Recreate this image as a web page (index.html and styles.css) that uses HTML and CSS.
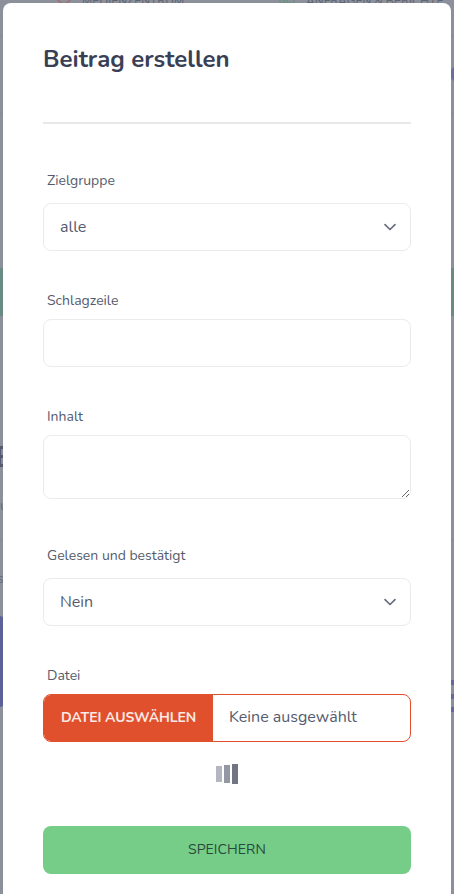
FILE: index.html
```html
<!DOCTYPE html>
<html lang="de">
<head>
<meta charset="utf-8">
<title>Beitrag erstellen</title>
<link rel="stylesheet" href="styles.css">
</head>
<body>
<div class="backdrop" aria-hidden="true">
  <svg class="page-icon media" viewBox="0 0 16 16"><circle cx="8" cy="8" r="6.5"/></svg>
  <span class="nav-text nav-media">MEDIENZENTRUM</span>
  <svg class="page-icon reports" viewBox="0 0 16 16"><path d="M1 1v13h14V1M5 1v14M5 9l6 6"/></svg>
  <span class="nav-text nav-reports">ANFRAGEN &amp; BERICHTE</span>
  <i class="band"></i>
  <span class="page-heading">E</span>
  <span class="page-copy copy-one">u</span>
  <span class="page-copy copy-two">s</span>
  <i class="rule rule-one"></i><i class="rule rule-two"></i><i class="rule rule-three"></i>
  <i class="tile"></i>
  <i class="dot"></i>
  <i class="menu-bar bar-one"></i><i class="menu-bar bar-two"></i><i class="menu-bar bar-three"></i>
</div>
<form class="modal">
  <h1 class="title">Beitrag erstellen</h1>
  <hr class="divider">
  <div class="field audience">
    <label class="label" for="audience">Zielgruppe</label>
    <div class="select-wrap">
      <select id="audience" class="control select"><option>alle</option></select>
      <svg class="chevron" viewBox="0 0 14 10"><path d="M2 2.7 7 7.5 12 2.7"/></svg>
    </div>
  </div>
  <div class="field headline">
    <label class="label" for="headline">Schlagzeile</label>
    <input id="headline" class="control" type="text">
  </div>
  <div class="field content">
    <label class="label" for="content">Inhalt</label>
    <textarea id="content" class="control textarea"></textarea>
  </div>
  <div class="field confirm">
    <label class="label" for="confirm">Gelesen und bestätigt</label>
    <div class="select-wrap">
      <select id="confirm" class="control select"><option>Nein</option></select>
      <svg class="chevron" viewBox="0 0 14 10"><path d="M2 2.7 7 7.5 12 2.7"/></svg>
    </div>
  </div>
  <div class="field upload">
    <span class="label">Datei</span>
    <div class="file">
      <span class="file-button">DATEI AUSWÄHLEN</span>
      <span class="file-name">Keine ausgewählt</span>
    </div>
  </div>
  <div class="loader"><i class="load-one"></i><i class="load-two"></i><i class="load-three"></i></div>
  <button class="submit" type="button">SPEICHERN</button>
</form>
</body>
</html>
```
FILE: styles.css
```css
* { box-sizing: border-box; }
html, body { height: 100%; overflow: hidden; }
body {
  margin: 0;
  padding: 3px 3px 0;
  background: #8c909a;
  color: #555b6d;
  font-family: Nunito, Lato, "Open Sans", sans-serif;
}

/* Dimmed page behind the dialog */
.backdrop { position: absolute; inset: 0; overflow: hidden; }
.backdrop > * { position: absolute; }
.page-icon { width: 16px; height: 16px; top: -11px; fill: none; stroke-width: 1.3; }
.media { left: 56px; stroke: #a56468; }
.reports { left: 279px; stroke: #689181; }
.nav-text { top: -7px; font-size: 12px; line-height: 16px; color: #5f6473; white-space: nowrap; }
.nav-media { left: 82px; }
.nav-reports { left: 306px; }
.band { left: 0; right: 0; top: 268px; height: 48px; background: #698b83; }
.page-heading { left: -5px; top: 442px; font-size: 30px; line-height: 32px; font-weight: 700; color: #555b6d; }
.page-copy { font-size: 14px; line-height: 18px; color: #676c7b; }
.copy-one { left: 0; top: 497px; }
.copy-two { left: -3px; top: 570px; }
.rule { left: 0; right: 0; height: 1px; background: #858994; }
.rule-one { top: 35px; }
.rule-two { top: 113px; }
.rule-three { top: 540px; }
.tile { left: -20px; width: 27px; top: 616px; height: 91px; border-radius: 8px; background: #5d619a; }
.dot { right: -12px; width: 16px; height: 16px; top: 66px; border-radius: 50%; background: #6b6e9e; }
.menu-bar { right: 0; width: 6px; height: 5px; background: #65689a; }
.bar-one { top: 680px; }
.bar-two { top: 694px; }
.bar-three { top: 707px; }

.modal {
  position: relative;
  display: flex;
  flex-direction: column;
  height: 900px;
  padding: 40px 40px 0;
  border-radius: 8px;
  background: #fff;
}
.title { margin: 0; font-size: 24px; line-height: 32px; font-weight: 700; color: #394056; }
.divider { width: 100%; height: 2px; margin: 47px 0 0; border: 0; background: #e8e8e8; }
.field { display: flex; flex-direction: column; gap: 8px; }
.audience { margin-top: 47px; gap: 12px; }
.headline { margin-top: 40px; }
.content { margin-top: 40px; }
.confirm { margin-top: 47px; gap: 12px; }
.upload { margin-top: 40px; }
.label { align-self: flex-start; padding-left: 4px; font-size: 14px; line-height: 20px; white-space: nowrap; }
.control {
  display: block;
  width: 100%;
  height: 48px;
  margin: 0;
  padding: 0 16px;
  border: 1px solid #ebebed;
  border-radius: 8px;
  background: #fff;
  color: #555b6d;
  font: 16px/24px Nunito, Lato, "Open Sans", sans-serif;
}
.select { appearance: none; }
.select-wrap { display: grid; align-items: center; }
.select-wrap > * { grid-area: 1 / 1; }
.chevron { z-index: 1; width: 14px; height: 10px; margin-right: 14px; justify-self: end; fill: none; stroke: #686e80; stroke-width: 1.7; stroke-linecap: round; stroke-linejoin: round; pointer-events: none; }
.textarea { height: 64px; resize: vertical; }
.file { display: flex; height: 48px; overflow: hidden; border: 1px solid #e0502d; border-radius: 8px; }
.file-button { display: flex; align-items: center; width: 169px; padding: 0 0 2px 17px; background: #e0502d; color: #fbeae5; font-size: 14px; font-weight: 700; letter-spacing: -.1px; white-space: nowrap; }
.file-name { padding-left: 16px; font-size: 16px; line-height: 44px; white-space: nowrap; }
.loader { display: flex; align-items: center; justify-content: center; gap: 2px; height: 20px; margin-top: 22px; }
.loader i { width: 6px; }
.load-one { height: 16px; background: #b4b7c0; }
.load-two { height: 18px; background: #9398a4; }
.load-three { height: 20px; background: #717583; }
.submit { height: 48px; margin: 42px 0 0; padding: 0; border: 0; border-radius: 8px; background: #76cd88; color: #29483c; font: 14px/20px Nunito, Lato, "Open Sans", sans-serif; letter-spacing: .1px; }
```
